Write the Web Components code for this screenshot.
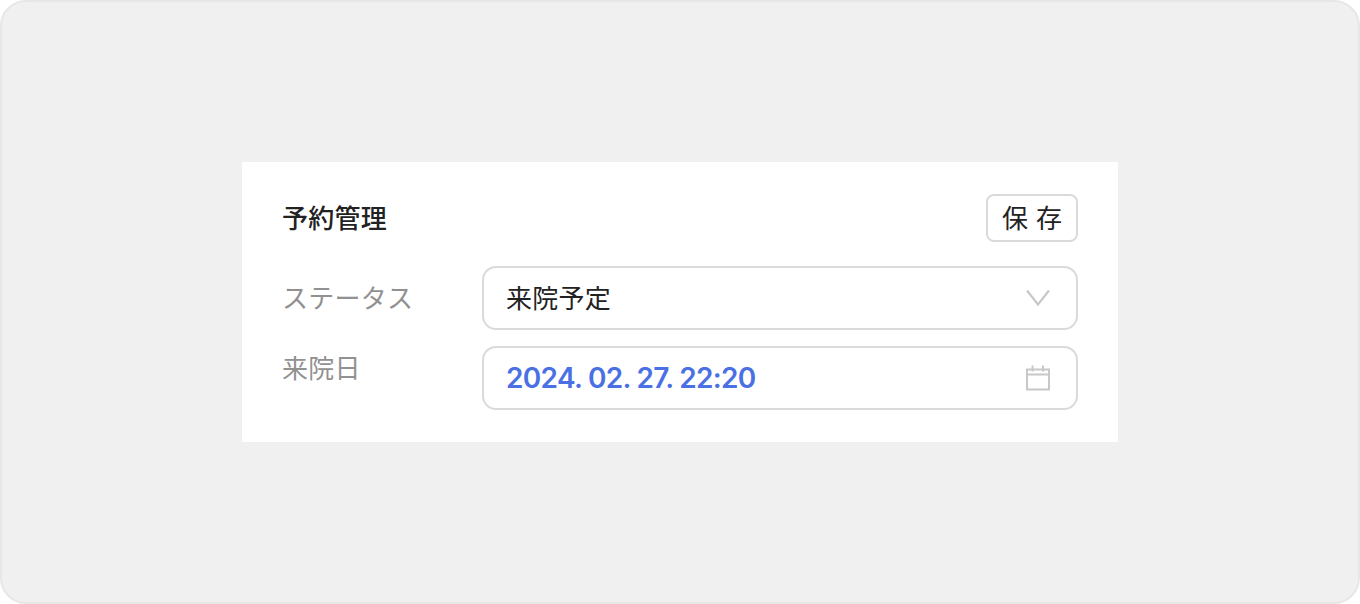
<!DOCTYPE html>
<html lang="ja"><head><meta charset="utf-8"><title>予約管理</title>
<style>html,body{margin:0;padding:0;background:#fff}</style></head>
<body>
<template id="t-frame"><style>
:host{display:flex;box-sizing:border-box;width:1360px;height:604px;align-items:flex-start;justify-content:center;padding-top:160px;background:#f0f0f0;border:2px solid #e7e7e7;border-radius:26px;font-family:"Noto Sans CJK JP","Noto Sans",sans-serif}
</style><slot></slot></template>
<template id="t-card"><style>
:host{display:flex;flex-direction:column;box-sizing:border-box;width:876px;height:280px;padding:32px 40px;background:#fff}
.head{display:flex;justify-content:space-between;align-items:flex-start;margin-bottom:24px}
.title{font-size:26px;font-weight:500;line-height:46px;letter-spacing:.25px;color:#222}
.rows{display:flex;flex-direction:column;gap:16px}
</style><div class="head"><div class="title"><slot name="title"></slot></div><slot name="action"></slot></div><div class="rows"><slot></slot></div></template>
<template id="t-btn"><style>
:host{display:flex;box-sizing:border-box;width:92px;height:48px;padding-bottom:4px;align-items:center;justify-content:center;border:2px solid #dadada;border-radius:8px;background:#fff;font-size:26px;word-spacing:2px;color:#222}
</style><slot></slot></template>
<template id="t-row"><style>
:host{display:flex;align-items:flex-start}
.label{width:200px;flex:none;font-size:26px;letter-spacing:.25px;color:#919191;line-height:42px;padding-top:var(--label-top,10px)}
.ctl{flex:1;min-width:0}
</style><div class="label"><slot name="label"></slot></div><div class="ctl"><slot></slot></div></template>
<template id="t-field"><style>
:host{display:flex;box-sizing:border-box;height:64px;align-items:center;justify-content:space-between;padding:0 25px 0 22px;border:2px solid #dadada;border-radius:14px;background:#fff;font-size:26px;letter-spacing:.25px;color:#222}
::slotted(svg){display:block;flex:none}
::slotted(.txt){display:block;padding-bottom:4px}
::slotted(.date){font-family:Inter,sans-serif;font-weight:600;font-size:28px;letter-spacing:-.68px;color:#4a70e4}
</style><slot></slot></template>
<re-frame><re-card>
<span slot="title">予約管理</span>
<re-btn slot="action">保 存</re-btn>
<re-row><span slot="label">ステータス</span><re-field><span class="txt">来院予定</span>
<svg width="26" height="20" viewBox="0 0 26 20" fill="none" stroke="#c8c8c8" stroke-width="2.2"><path d="M2 2.5l11 14 11-14"/></svg></re-field></re-row>
<re-row style="--label-top:0px"><span slot="label">来院日</span><re-field><span class="date">2024. 02. 27. 22:20</span>
<svg width="26" height="26" viewBox="0 0 26 26" fill="none" stroke="#c8c8c8" stroke-width="2"><path d="M2 4.5h22v20H2zM2 9.5h22M7.5 .5v6M18 .5v6"/></svg></re-field></re-row>
</re-card></re-frame>
<script>
for(const [n,t] of [['re-frame','t-frame'],['re-card','t-card'],['re-btn','t-btn'],['re-row','t-row'],['re-field','t-field']]){
customElements.define(n,class extends HTMLElement{constructor(){super();this.attachShadow({mode:'open'}).appendChild(document.getElementById(t).content.cloneNode(true))}})}
</script>
</body></html>
